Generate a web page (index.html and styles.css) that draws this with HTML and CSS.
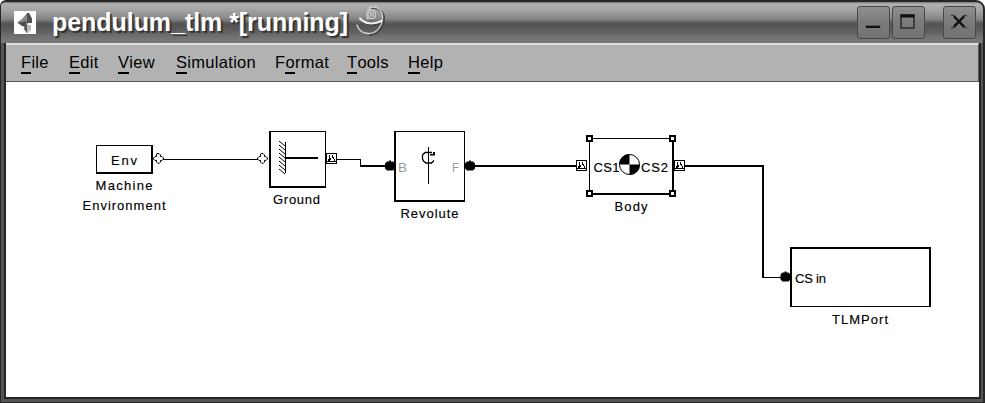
FILE: index.html
```html
<!DOCTYPE html>
<html lang="en">
<head>
<meta charset="utf-8">
<title>pendulum_tlm</title>
<link rel="stylesheet" href="styles.css">
</head>
<body>
<div class="window">
  <header class="titlebar">
    <svg class="app-icon" width="22" height="23" viewBox="0 0 22 23">
      <rect width="22" height="23" fill="#fff"/>
      <path d="M3 11.500L8 8 13 2H15L18 8V12H14L13 16 9 15Z" fill="#888"/>
      <path d="M13 2H15L18 8V12H13Z" fill="#505050"/>
      <path d="M4 12L12 10 12 16 8 15Z" fill="#4c4c4c"/>
      <path d="M11 14H17V19L14 22H12Z" fill="#bbb"/>
      <path d="M11 14H13V22L10 18Z" fill="#555"/>
    </svg>
    <h1 class="title">pendulum_tlm *[running]</h1>
    <svg class="swirl" width="30" height="30" viewBox="0 0 30 30" fill="none" stroke-linecap="round">
      <path d="M16 2C23 1 29 7 28 14C27 23 20 29 14 29" stroke="#444" stroke-width="1.800"/>
      <path d="M5 14C10 20 19 20 26 17" stroke="#444" stroke-width="1.500"/>
      <g stroke="#ccc" stroke-width="1.400">
        <path d="M14 1.500C21 -.5 27 4 26.500 12C26 21 20 27.500 13 27.500C7 27.500 2.500 24 1 19"/>
        <path d="M4 12.500C9 18.500 18 18.500 25.500 15" stroke="#eee" stroke-width="2"/>
        <path d="M14.500 2C10 6 10 10 12 13"/>
        <rect x="12" y="4.500" width="7.500" height="8" rx="3" stroke-width="1.100"/>
        <rect x="14.500" y="7" width="2.500" height="3" stroke-width="1"/>
      </g>
    </svg>
    <div class="controls">
      <button class="control" aria-label="Minimize"><svg width="33" height="33"><path d="M8.500 20.500H23.500" stroke="#555" stroke-width="3"/><path d="M9 21H23" stroke="#111" stroke-width="2"/></svg></button>
      <button class="control" aria-label="Maximize"><svg width="33" height="33"><rect x="9" y="9" width="13" height="13" fill="none" stroke="#2b2b2b" stroke-width="1.500"/><path d="M8.500 10H22.500" stroke="#111" stroke-width="3"/></svg></button>
      <button class="control close" aria-label="Close"><svg width="33" height="33"><path d="M8 9.500H11L20.500 21.500H24M24 9.500H21L11.500 21.500H8" fill="none" stroke="#3d3d3d" stroke-width="1.500"/><path d="M11 10.500L21 20.500M21 10.500L11 20.500" stroke="#111" stroke-width="2.400"/></svg></button>
    </div>
  </header>
  <div class="frame">
    <nav class="menu">
      <span><u>F</u>ile</span>
      <span><u>E</u>dit</span>
      <span><u>V</u>iew</span>
      <span><u>S</u>imulation</span>
      <span>F<u>o</u>rmat</span>
      <span><u>T</u>ools</span>
      <span><u>H</u>elp</span>
    </nav>
    <svg class="model" width="973" height="315" viewBox="6 82 973 315">
      <defs>
        <g id="cs-port" shape-rendering="crispEdges">
          <rect x=".5" y=".5" width="10" height="10" fill="#fff" stroke="#000"/>
          <path d="M3 2H4V6H3ZM6 2H7V5H6ZM2 6H4V8H2ZM4 5H5V7H4ZM7 4H8V6H7ZM8 6H9V8H8ZM1 8H10V9H1Z"/>
        </g>
        <path id="dot" d="M4 0H6V1H8L10 3V8L8 10H2L0 8V3L2 1H4Z"/>
        <path id="diamond" d="M4 .5H6L7.5 2V3.5H9L10.5 5V6L9 7.5H7.5V9L6 10.5H5L3.5 9V7.5H2L.5 6V5L2 3.5H3.5V1Z" fill="#fff" stroke="#000"/>
        <g id="handle" shape-rendering="crispEdges"><rect width="7" height="7"/><rect x="2" y="2" width="3" height="3" fill="#fff"/></g>
      </defs>

      <g class="wires">
        <path d="M162 159H259V160H162Z"/>
        <path d="M336 159H361V165H386V167H360V160H336Z"/>
        <path d="M474 165H579V167H474Z"/>
        <path d="M685 165H764V277H782V278H762V167H685Z"/>
      </g>

      <g class="boxes">
        <path d="M96 145H153V174H96ZM97 146V172H151V146Z"/>
        <path d="M269 131H326V188H269ZM271 132V186H325V132Z"/>
        <path d="M394 131H465V202H394ZM396 132V200H464V132Z"/>
        <path d="M589 138H674V195H589ZM590 139V193H672V139Z"/>
        <path d="M790 247H931V307H790ZM792 249V306H929V249Z"/>
      </g>

      <use href="#diamond" x="153" y="153"/>
      <use href="#diamond" x="257" y="153"/>
      <use href="#cs-port" x="326" y="153"/>
      <use href="#dot" x="385" y="160.500"/>
      <use href="#dot" x="465" y="160.500"/>
      <use href="#cs-port" x="576" y="160"/>
      <use href="#cs-port" x="674" y="160"/>
      <use href="#dot" x="780.500" y="271.500"/>

      <g class="boxes">
        <path d="M285 142H286V173H285ZM286 157H318V159H286Z"/>
        <path d="M428 147H429V184H428Z"/>
      </g>
      <path d="M279 141L285 146M279 145L285 150M279 149L285 154M279 153L285 158M279 157L285 162M279 161L285 166M279 165L285 170M279 169L285 174" stroke="#000" stroke-width="1"/>
      <path d="M434 160.500L431.500 163H426L423.500 161L422.500 159V155L425 152.500H432" fill="none" stroke="#000" stroke-width="1.300"/>
      <path d="M430 155.500H435V152H433V154H430Z"/>

      <text class="gray" x="398" y="172" textLength="9" lengthAdjust="spacingAndGlyphs">B</text>
      <text class="gray" x="452" y="172" textLength="7" lengthAdjust="spacingAndGlyphs">F</text>
      <text x="593.500" y="172" textLength="26">CS1</text>
      <text x="641" y="172" textLength="27">CS2</text>
      <circle cx="629.500" cy="164.500" r="10" fill="#fff" stroke="#000"/>
      <path d="M629.500 164.500V154A10.500 10.500 0 0 0 619 164.500ZM629.500 164.500V175A10.500 10.500 0 0 0 640 164.500Z"/>

      <use href="#handle" x="586" y="135"/>
      <use href="#handle" x="669" y="135"/>
      <use href="#handle" x="586" y="190"/>
      <use href="#handle" x="669" y="190"/>

      <text x="111" y="165" textLength="26">Env</text>
      <text x="95.500" y="190" textLength="57">Machine</text>
      <text x="82.500" y="210" textLength="83">Environment</text>
      <text x="273" y="204" textLength="47">Ground</text>
      <text x="400.500" y="218" textLength="58">Revolute</text>
      <text x="614.500" y="211" textLength="33">Body</text>
      <text x="795" y="283" textLength="31">CS in</text>
      <text x="832" y="324" textLength="56">TLMPort</text>
    </svg>
  </div>
</div>
</body>
</html>
```
FILE: styles.css
```css
* { box-sizing: border-box; }

body {
  margin: 0;
  background: #fff;
  font-family: "Liberation Sans", Arial, sans-serif;
}

.window {
  width: 985px;
  height: 403px;
  display: flex;
  flex-direction: column;
  overflow: hidden;
  background: #555;
  border: solid #262626;
  border-width: 2px 2px 1px 1px;
  border-radius: 6px 9px 0 0;
}

.titlebar {
  height: 41px;
  flex: none;
  display: flex;
  align-items: flex-start;
  padding: 0 7px 0 13px;
  background: linear-gradient(#777 0, #b2b2b2 2px, #a4a4a4 8px, #858585 17px, #656565 20px, #525252 22px, #5c5c5c 28px, #747474 36px, #7a7a7a 41px);
}

.app-icon { margin-top: 9px; }

.title {
  width: 296px;
  margin: 5px 0 0 16px;
  font-size: 25px;
  line-height: 30px;
  font-weight: bold;
  letter-spacing: -0.05px;
  white-space: nowrap;
  color: #fff;
  text-shadow: 2px 2px 1px #333;
}

.swirl { margin: 4px 0 0 8px; }

.controls {
  display: flex;
  gap: 2px;
  margin: 4px 0 0 auto;
}

.control {
  width: 33px;
  height: 33px;
  padding: 0;
  border: 1px solid #484848;
  border-radius: 3px;
  background: linear-gradient(#8f8f8f, #7c7c7c 48%, #727272);
}

.control svg { display: block; margin: -1px; }
.close { margin-left: 16px; }

.frame {
  height: 356px;
  margin: 0 2px 0 3px;
  border: solid #262626;
  border-width: 0 2px 2px;
}

.menu {
  height: 39px;
  display: grid;
  grid-template-columns: 48px 49px 58px 99px 72px 61px 50px;
  padding: 8px 0 0 15px;
  background: #b2b2b2;
  border-top: 2px solid #ddd;
  border-bottom: 1px solid #555;
  border-right: 1px solid #555;
  color: #000;
  font-size: 16.5px;
  line-height: 18px;
  letter-spacing: 0.3px;
}

.menu u {
  display: inline-block;
  height: 21px;
  border-bottom: 2px solid #000;
  text-decoration: none;
}

.model {
  display: block;
  background: #fff;
}

.model text {
  font-size: 13px;
  fill: #000;
  stroke: #000;
  stroke-width: 0.15px;
}

.model .gray { fill: #999; stroke: none; }

.wires, .boxes {
  fill: #000;
  fill-rule: evenodd;
  shape-rendering: crispEdges;
}
```
